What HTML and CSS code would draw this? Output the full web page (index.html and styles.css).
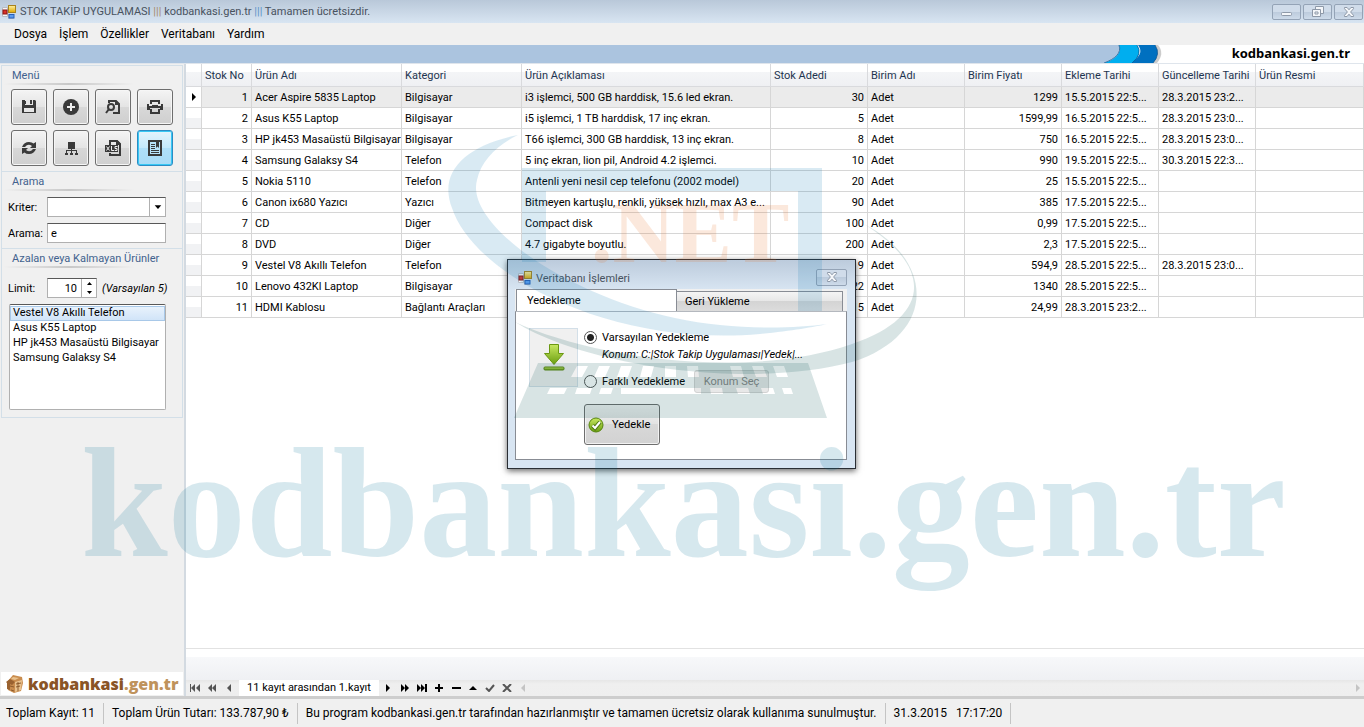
FILE: index.html
```html
<!DOCTYPE html>
<html lang="tr">
<head>
<meta charset="utf-8">
<title>STOK TAKİP UYGULAMASI</title>
<link rel="stylesheet" href="styles.css">
</head>
<body>
<svg class="defs" aria-hidden="true">
  <defs>
    <linearGradient id="gold" x2="0" y2="1"><stop stop-color="#fff0a0"/><stop offset="1" stop-color="#e0a800"/></linearGradient>
    <linearGradient id="green" x2="0" y2="1"><stop stop-color="#c8e860"/><stop offset="1" stop-color="#6a9e10"/></linearGradient>
    <symbol id="app" viewBox="0 0 14 14">
      <path d="M.5 2.500h5v9h-5zM6.500 9.500h5v4h-5z" fill="#f5f5f5" stroke="#b8bcc4"/>
      <rect x="6.500" y=".5" width="7" height="7" fill="url(#gold)" stroke="#a8821c"/>
      <rect x="1" y="5" width="4" height="4" fill="#d83028" stroke="#8c1410"/>
      <rect x="7" y="9.500" width="5" height="3.500" fill="#5c9cf0" stroke="#2860b8"/>
    </symbol>
    <symbol id="cross" viewBox="0 0 12 10"><path d="M1.500.5h2.600L6 2.800 7.900.5h2.600v1.200L7.600 5l2.900 3.300v1.200H7.900L6 7.200 4.100 9.500H1.500V8.300L4.400 5 1.500 1.700z" fill="#f4f6f9" stroke="#8e99a8"/></symbol>
  </defs>
</svg>

<header class="titlebar">
  <svg class="app-icon"><use href="#app"/></svg>
  <h1 class="title">STOK TAKİP UYGULAMASI <span class="bars-a">|||</span> kodbankasi.gen.tr <span class="bars-b">|||</span> Tamamen ücretsizdir.</h1>
  <div class="win-buttons">
    <button class="win-btn" aria-label="Küçült"><svg width="14" height="10" viewBox="0 0 14 10"><rect x="1.500" y="5.500" width="10" height="3" rx="1" fill="#f4f6f9" stroke="#8e99a8"/></svg></button>
    <button class="win-btn" aria-label="Önceki boyut"><svg width="12" height="11" viewBox="0 0 12 11"><g fill="#f4f6f9" stroke="#8e99a8"><path d="M3.500.5h8v7h-8z"/><path d="M.5 3.500h8v7h-8z"/><path d="M3 6h3v2H3z"/></g></svg></button>
    <button class="win-btn" aria-label="Kapat"><svg width="12" height="10"><use href="#cross"/></svg></button>
  </div>
</header>

<nav class="menubar">
  <button>Dosya</button><button>İşlem</button><button>Özellikler</button><button>Veritabanı</button><button>Yardım</button>
</nav>

<div class="banner">
  <svg class="swoosh" viewBox="0 0 80 18">
    <path d="M16 0h64v18H2C12 14 18 8 16 0z" fill="#fff"/>
    <path d="M44 0h12q7 8-1 18h-9z" fill="#9a9a9a" opacity=".5"/>
    <path d="M36 0h17q6 9-2 18H26C36 14 42 8 36 0z" fill="#0070c0"/>
    <path d="M17 0h18q6 9-5 18H2C14 14 20 8 17 0z" fill="#00aeef"/>
    <path d="M0 0h17c3 8-4 14-15 18H0z" fill="#abc4df"/>
    <path d="M17 0c3 8-4 14-15 18M35 0q6 9-5 18M53 0q6 9-2 18" fill="none" stroke="#08508c" stroke-width="1" opacity=".7"/>
  </svg>
  <strong class="banner-name">kodbankasi.gen.tr</strong>
</div>

<main class="workspace">
  <aside class="sidebar">
    <section class="panel">
      <h2>Menü</h2>
      <div class="tools">
        <button class="tool" aria-label="Kaydet"><svg viewBox="0 0 16 16"><path d="M1 1h13l1 1v12H1z"/><path d="M4 1h8v5H4zM3 9h10v4H3z" fill="#e6e6e6"/><path d="M9 1h2v4H9zM4 2h1v3H4z"/></svg></button>
        <button class="tool" aria-label="Ekle"><svg viewBox="0 0 16 16"><circle cx="8" cy="8" r="8"/><path d="M7 4h2v3h3v2H9v3H7V9H4V7h3z" fill="#eee"/></svg></button>
        <button class="tool" aria-label="Bul"><svg viewBox="0 0 16 16"><path d="M4 4V2h7l3 3v9H8M11 2v3h3" fill="none" stroke="#3a3a3a" stroke-width="2"/><circle cx="6" cy="8" r="3" fill="none" stroke="#3a3a3a" stroke-width="2"/><path d="M4 10l-3 4" stroke="#3a3a3a" stroke-width="2"/></svg></button>
        <button class="tool" aria-label="Yazdır"><svg viewBox="0 0 16 16"><path d="M3 1h10v4h-2V3H5v2H3zM0 5h2v2h12V5h2v6h-3V9H3v2H0zM3 10h2v3h6v-3h2v5H3zM5 6h6v1H5z"/></svg></button>
        <button class="tool" aria-label="Yenile"><svg viewBox="0 0 16 16"><path d="M1 7q2-5 7-5 3 0 4.500 1.500L15 2v6H9l2-2Q7 3 4 7zM15 9q-2 5-7 5-3 0-4.500-1.500L1 14V8h6l-2 2q4 3 7-1z"/></svg></button>
        <button class="tool" aria-label="Kategoriler"><svg viewBox="0 0 16 16"><path d="M5 2h7v7h-3v1h5v3h1v2h-3v-2h1v-2H9v2h1v2H7v-2h1v-2H4v2h1v2H2v-2h1v-3h5V9H5z"/></svg></button>
        <button class="tool" aria-label="Excel'e aktar"><svg viewBox="0 0 16 16"><path d="M5 5V1h7l3 3v11H5v-2" fill="none" stroke="#3a3a3a" stroke-width="2"/><path d="M11 0v5h5v-1L12 0z"/><path d="M0 5h13v7H0z"/><path d="M1.500 6.500l3 4m0-4l-3 4M6.500 6v4.500H9M12.500 6.500H10v2h2v2H9.700" fill="none" stroke="#eee"/></svg></button>
        <button class="tool tool-active" aria-label="Rapor"><svg viewBox="0 0 16 16"><path d="M1 0h14v16H1z"/><path d="M3 2h10v12H3z" fill="#b8e2f8"/><path d="M9 1h3v7l-1.500-1.500L9 8zM4 4h4v1H4zM4 6h4v1H4zM4 8h4v1H4zM4 10h8v1H4zM4 12h8v1H4z"/></svg></button>
      </div>
    </section>
    <section class="panel">
      <h2>Arama</h2>
      <div class="field"><label for="kriter">Kriter:</label>
        <span class="combo"><select id="kriter"><option></option></select><svg class="combo-arrow" viewBox="0 0 16 18"><path d="M5 7h7L8.500 11z"/></svg></span></div>
      <div class="field"><label for="arama">Arama:</label><input id="arama" class="box" type="text" value="e"></div>
    </section>
    <section class="panel">
      <h2>Azalan veya Kalmayan Ürünler</h2>
      <div class="field field-limit"><label for="limit">Limit:</label>
        <span class="spinner"><input id="limit" type="number" value="10"><span class="spin-buttons"><button aria-label="Artır"><svg viewBox="0 0 5 3"><path d="M0 3h5L2.500 0z"/></svg></button><button aria-label="Azalt"><svg viewBox="0 0 5 3"><path d="M0 0h5L2.500 3z"/></svg></button></span></span>
        <em>(Varsayılan 5)</em></div>
      <select class="listbox" size="7" aria-label="Azalan ürünler">
        <option selected>Vestel V8 Akıllı Telefon</option><option>Asus K55 Laptop</option><option>HP jk453 Masaüstü Bilgisayar</option><option>Samsung Galaksy S4</option>
      </select>
    </section>
    <div class="brand">
      <svg width="20" height="20" viewBox="0 0 20 20"><path d="M2 8L8 1l9 2 1 6-2 8-7 2-6-3z" fill="#c98c4e"/><path d="M1 8l4-3 5 3-3 3-2-1v6l-3-1V9z" fill="#9a6230"/><path d="M10 8l7-2-1 10-6 2zM8 3l6 1-4 2-4-1z" fill="#e9c28e"/><path d="M11 10l5-1M11 13l4-1M13 8v9M5 12l4 1M6 16l3 1" stroke="#8c5a2c" fill="none"/></svg>
      <strong>kodbankasi<span>.gen.tr</span></strong>
    </div>
  </aside>

  <section class="grid-pane">
    <table class="grid">
      <colgroup><col class="c-ind"><col class="c-no"><col class="c-name"><col class="c-cat"><col class="c-desc"><col class="c-std"><col class="c-std"><col class="c-std"><col class="c-std"><col class="c-std"><col></colgroup>
      <thead><tr><th></th><th>Stok No</th><th>Ürün Adı</th><th>Kategori</th><th>Ürün Açıklaması</th><th>Stok Adedi</th><th>Birim Adı</th><th>Birim Fiyatı</th><th>Ekleme Tarihi</th><th>Güncelleme Tarihi</th><th>Ürün Resmi</th></tr></thead>
      <tbody>
        <tr class="current"><td><svg class="row-mark" viewBox="0 0 4 8"><path d="M0 0l4 4-4 4z"/></svg></td><td class="num">1</td><td>Acer Aspire 5835 Laptop</td><td>Bilgisayar</td><td>i3 işlemci, 500 GB harddisk, 15.6 led ekran.</td><td class="num">30</td><td>Adet</td><td class="num">1299</td><td>15.5.2015 22:5...</td><td>28.3.2015 23:2...</td><td></td></tr>
        <tr><td></td><td class="num">2</td><td>Asus K55 Laptop</td><td>Bilgisayar</td><td>i5 işlemci, 1 TB harddisk, 17 inç ekran.</td><td class="num">5</td><td>Adet</td><td class="num">1599,99</td><td>16.5.2015 22:5...</td><td>28.3.2015 23:0...</td><td></td></tr>
        <tr><td></td><td class="num">3</td><td>HP jk453 Masaüstü Bilgisayar</td><td>Bilgisayar</td><td>T66 işlemci, 300 GB harddisk, 13 inç ekran.</td><td class="num">8</td><td>Adet</td><td class="num">750</td><td>16.5.2015 22:5...</td><td>28.3.2015 23:0...</td><td></td></tr>
        <tr><td></td><td class="num">4</td><td>Samsung Galaksy S4</td><td>Telefon</td><td>5 inç ekran, lion pil, Android 4.2 işlemci.</td><td class="num">10</td><td>Adet</td><td class="num">990</td><td>19.5.2015 22:5...</td><td>30.3.2015 22:3...</td><td></td></tr>
        <tr><td></td><td class="num">5</td><td>Nokia 5110</td><td>Telefon</td><td>Antenli yeni nesil cep telefonu (2002 model)</td><td class="num">20</td><td>Adet</td><td class="num">25</td><td>15.5.2015 22:5...</td><td></td><td></td></tr>
        <tr><td></td><td class="num">6</td><td>Canon ix680 Yazıcı</td><td>Yazıcı</td><td>Bitmeyen kartuşlu, renkli, yüksek hızlı, max A3 e...</td><td class="num">90</td><td>Adet</td><td class="num">385</td><td>17.5.2015 22:5...</td><td></td><td></td></tr>
        <tr><td></td><td class="num">7</td><td>CD</td><td>Diğer</td><td>Compact disk</td><td class="num">100</td><td>Adet</td><td class="num">0,99</td><td>17.5.2015 22:5...</td><td></td><td></td></tr>
        <tr><td></td><td class="num">8</td><td>DVD</td><td>Diğer</td><td>4.7 gigabyte boyutlu.</td><td class="num">200</td><td>Adet</td><td class="num">2,3</td><td>17.5.2015 22:5...</td><td></td><td></td></tr>
        <tr><td></td><td class="num">9</td><td>Vestel V8 Akıllı Telefon</td><td>Telefon</td><td></td><td class="num">9</td><td>Adet</td><td class="num">594,9</td><td>28.5.2015 22:5...</td><td>28.3.2015 23:0...</td><td></td></tr>
        <tr><td></td><td class="num">10</td><td>Lenovo 432Kl Laptop</td><td>Bilgisayar</td><td></td><td class="num">22</td><td>Adet</td><td class="num">1340</td><td>28.5.2015 22:5...</td><td></td><td></td></tr>
        <tr><td></td><td class="num">11</td><td>HDMI Kablosu</td><td>Bağlantı Araçları</td><td></td><td class="num">15</td><td>Adet</td><td class="num">24,99</td><td>28.3.2015 23:2...</td><td></td><td></td></tr>
      </tbody>
    </table>
    <div class="grid-footer"></div>
    <div class="navigator">
      <button class="dim" aria-label="İlk"><svg viewBox="0 0 10 8"><path d="M0 0h1v8H0zM5 0v8L1 4zM10 0v8L6 4z"/></svg></button>
      <button class="dim" aria-label="Önceki sayfa"><svg viewBox="0 0 10 8"><path d="M5 0v8L1 4zM9 0v8L5 4z"/></svg></button>
      <button class="dim" aria-label="Önceki"><svg viewBox="0 0 10 8"><path d="M7 0v8L3 4z"/></svg></button>
      <span class="nav-text">11 kayıt arasından 1.kayıt</span>
      <button aria-label="Sonraki"><svg viewBox="0 0 10 8"><path d="M3 0l4 4-4 4z"/></svg></button>
      <button aria-label="Sonraki sayfa"><svg viewBox="0 0 10 8"><path d="M1 0l4 4-4 4zM5 0l4 4-4 4z"/></svg></button>
      <button aria-label="Son"><svg viewBox="0 0 10 8"><path d="M0 0l4 4-4 4zM4 0l4 4-4 4zM8 0h2v8H8z"/></svg></button>
      <button aria-label="Ekle"><svg viewBox="0 0 10 8"><path d="M4 0h2v3h3v2H6v3H4V5H1V3h3z"/></svg></button>
      <button aria-label="Sil"><svg viewBox="0 0 10 8"><path d="M1 3h9v2H1z"/></svg></button>
      <button aria-label="Düzenle"><svg viewBox="0 0 10 8"><path d="M1 6h8L5 2z"/></svg></button>
      <button class="dim" aria-label="Onayla"><svg viewBox="0 0 10 8"><path d="M1 4l3 3 5-6" fill="none" stroke="#555" stroke-width="2"/></svg></button>
      <button class="dim" aria-label="Vazgeç"><svg viewBox="0 0 10 8"><path d="M1 0l8 8M9 0L1 8" fill="none" stroke="#555" stroke-width="2"/></svg></button>
      <div class="hscroll"><svg viewBox="0 0 4 8"><path d="M4 0v8L0 4z"/></svg><svg viewBox="0 0 4 8"><path d="M0 0l4 4-4 4z"/></svg></div>
    </div>
  </section>
</main>

<footer class="statusbar">
  <span>Toplam Kayıt: 11</span><span>Toplam Ürün Tutarı: 133.787,90 ₺</span><span>Bu program kodbankasi.gen.tr tarafından hazırlanmıştır ve tamamen ücretsiz olarak kullanıma sunulmuştur.</span><span>31.3.2015 &nbsp; 17:17:20</span>
</footer>

<div class="dialog" role="dialog" aria-labelledby="dlg-title">
  <div class="dialog-title">
    <svg class="app-icon"><use href="#app"/></svg>
    <h2 id="dlg-title">Veritabanı İşlemleri</h2>
    <button class="win-btn" aria-label="Kapat"><svg width="12" height="10"><use href="#cross"/></svg></button>
  </div>
  <div class="tabs"><button class="tab tab-on">Yedekleme</button><button class="tab">Geri Yükleme</button></div>
  <div class="tab-page">
    <div class="picture"><svg width="22" height="28" viewBox="0 0 22 28"><path d="M6.500.5h9v9h5L11 20.500 1.500 9.500h5z" fill="url(#green)" stroke="#6b9812"/><rect x="1" y="23" width="20" height="3" rx="1" fill="url(#green)" stroke="#5c860e"/></svg></div>
    <div class="options">
      <label class="choice"><input type="radio" name="yer" checked>Varsayılan Yedekleme</label>
      <em class="location">Konum: C:|Stok Takip Uygulaması|Yedek|...</em>
      <div class="choice-row"><label class="choice"><input type="radio" name="yer">Farklı Yedekleme</label><button class="pick" disabled>Konum Seç</button></div>
      <button class="backup"><svg width="16" height="16" viewBox="0 0 16 16"><circle cx="8" cy="8" r="7" fill="url(#green)" stroke="#55850f"/><path d="M4.500 8.500L7 11l5-6" fill="none" stroke="#4c7612" stroke-width="4"/><path d="M4.500 8.500L7 11l5-6" fill="none" stroke="#fff" stroke-width="2"/></svg>Yedekle</button>
    </div>
  </div>
</div>

<svg class="watermark" viewBox="0 0 1364 727" preserveAspectRatio="xMinYMin meet" aria-hidden="true">
  <path class="w-blue" d="M518 135C465 146 438 172 452 208C474 275 610 347 760 334C790 331 815 327 827 324C790 329 730 330 675 318C560 293 465 222 477 180C481 161 497 145 518 135z"/>
  <path class="w-blue" d="M522 168H822V311H798V191H546V262H522z"/>
  <path class="w-gray" d="M864 224C935 268 930 318 852 344C746 381 590 357 515 322C586 366 746 390 852 362C935 336 937 262 864 224z"/>
  <path class="w-gray" fill-rule="evenodd" d="M538 363H808L827 418H514zM577 366l-6 11h11l6-11zM599 366l-5 11h11l5-11zM621 366l-4 11h11l4-11zM643 366l-3 11h11l3-11zM665 366v11h11v-11zM687 366l1 11h11l-1-11zM730 366l3 11h11l-3-11zM752 366l4 11h11l-4-11zM773 366l4 11h11l-4-11zM550 388l-3 6h17l3-6zM577 388l-2 6h15l2-6zM601 388l-2 6h12l2-6zM621 388v6h80v-6zM710 388l1 6h12l-1-6zM736 388l2 6h12l-2-6zM761 388l2 6h12l-2-6zM782 388l2 6h9l-2-6z"/>
  <text class="w-net" x="591" y="262">.NET</text>
  <text class="w-name" x="81" y="556">kodbankasi.gen.tr</text>
</svg>
</body>
</html>
```

FILE: styles.css
```css
* { box-sizing: border-box; }
body {
  margin: 0; min-height: 100vh; display: flex; flex-direction: column; position: relative;
  background: #f0f0f0; color: #000; font: 11px/15px Roboto, "Noto Sans", sans-serif;
}
button, input, select { font: inherit; color: inherit; margin: 0; }
button { padding: 0; }
h1, h2 { margin: 0; font-size: 11px; font-weight: 400; }
svg { display: block; flex: none; }
.defs { position: absolute; width: 0; height: 0; }

.titlebar {
  height: 23px; display: flex; align-items: center; padding: 0 1px 0 2px; gap: 4px;
  background: linear-gradient(#b9c8d9, #d8e5f2);
}
.app-icon { width: 14px; height: 14px; }
.title { flex: 1; color: #48525e; white-space: nowrap; }
.bars-a { color: #a88c6c; }
.bars-b { color: #5c94c8; }
.win-buttons { display: flex; gap: 2px; }
.win-btn {
  width: 29px; height: 16px; display: flex; align-items: center; justify-content: center;
  border: 1px solid #94a3b6; border-radius: 2px; background: linear-gradient(#d0dcea 50%, #bccbdc 50%, #cedbea);
}

.menubar { height: 22px; display: flex; align-items: center; gap: 12px; padding-left: 14px; font-size: 12px; }
.menubar button { border: 0; background: none; }

.banner { height: 19px; display: flex; background: #abc4df; border-bottom: 1px solid #dfe5ec; }
.swoosh { width: 80px; height: 18px; margin-left: auto; }
.banner-name { width: 182px; padding-right: 14px; background: #fff; text-align: right; font: 700 13px/17px "Noto Sans", sans-serif; }

.workspace { flex: 1; display: flex; min-height: 0; }
.sidebar { width: 186px; display: flex; flex-direction: column; padding: 1px; border-right: 2px solid #d3dae1; }
.panel { border: 1px solid #d3dfe8; padding: 2px 16px 5px 6px; }
.panel + .panel { border-top: 0; }
.panel h2 { padding-left: 4px; color: #42628e; white-space: nowrap; }
.panel h2::after { content: ""; display: block; height: 2px; width: 130px; margin-left: -8px; background: linear-gradient(90deg, transparent, #c8c8c8, transparent); }
.tools { display: grid; grid-template-columns: repeat(4, 36px); gap: 5px 6px; padding: 4px 0 0 3px; }
.tool {
  height: 36px; display: grid; place-items: center; border: 1px solid #6e6e6e; border-radius: 3px;
  background: linear-gradient(#f4f4f4, #e4e4e4 50%, #d8d8d8 50%, #cfcfcf); box-shadow: inset 0 0 0 1px #f6f6f6;
}
.tool svg { width: 16px; height: 16px; fill: #3a3a3a; }
.tool-active { border-color: #2c8cc4; background: linear-gradient(#e2f4fd, #c4e8fa 50%, #b0dff8 50%, #a8dbf6); box-shadow: inset 0 0 0 1px #38c8f4; }
.field { display: flex; align-items: center; height: 20px; margin-top: 6px; white-space: nowrap; }
.field-limit { margin-top: 10px; }
.field label { width: 39px; flex: none; }
.field em { margin-left: 5px; }
.box, .combo, .spinner { height: 20px; border: 1px solid #b0b0b0; border-top-color: #585858; background: #fff; }
.box { flex: 1; min-width: 0; padding: 0 3px; }
.combo { flex: 1; display: flex; }
.combo select { flex: 1; min-width: 0; border: 0; appearance: none; background: #fff; }
.combo-arrow { width: 16px; height: 18px; border-left: 1px solid #b0b0b0; }
.spinner { width: 50px; flex: none; display: flex; }
.spinner input { width: 33px; border: 0; padding: 0 4px; text-align: right; appearance: textfield; background: none; }
.spinner input::-webkit-inner-spin-button { appearance: none; margin: 0; }
.spin-buttons { flex: 1; display: flex; flex-direction: column; border-left: 1px solid #b0b0b0; }
.spin-buttons button { flex: 1; display: grid; place-items: center; border: 0; background: none; }
.spin-buttons svg { width: 5px; height: 3px; }
.listbox { display: block; width: calc(100% - 1px); height: 106px; margin: 6px 0 2px 1px; padding: 1px 0 0; border: 1px solid #b0b0b0; border-top-color: #585858; background: #fff; overflow: hidden; }
.listbox option { height: 15px; min-height: 0; padding: 0 3px; line-height: 15px; }
.listbox option:checked { color: #000; background: linear-gradient(#eaf3fc, #cfe3f8); outline: 1px solid #a8c8e8; outline-offset: -1px; }
.brand { height: 23px; margin-top: auto; padding-left: 4px; display: flex; align-items: center; gap: 3px; background: #fff; color: #8a5426; font: 700 16px/20px "Open Sans", sans-serif; }
.brand span { color: #bf935c; }

.grid-pane { flex: 1; min-width: 0; display: flex; flex-direction: column; background: #fff; }
.grid { width: 100%; table-layout: fixed; border-collapse: separate; border-spacing: 0; }
.c-ind { width: 16px; }
.c-no { width: 50px; }
.c-name { width: 150px; }
.c-cat { width: 120px; }
.c-desc { width: 249px; }
.c-std { width: 97px; }
.grid th, .grid td { padding: 0 3px; border: solid #d6d6d6; border-width: 0 1px 1px 0; font-weight: 400; text-align: left; white-space: nowrap; overflow: hidden; }
.grid th { height: 23px; color: #1e3450; background: linear-gradient(#fff 35%, #f4f5f7 35%, #eff0f3); border-color: #d9dadd; }
.grid td { height: 21px; }
.grid td:first-child { background: linear-gradient(#fff 50%, #f1f2f4 50%); }
.grid .num { text-align: right; }
.grid .current td { background: #ebebeb; }
.grid .current td:first-child { background: #fff; }
.row-mark { width: 4px; height: 8px; margin-left: 3px; }
.grid-footer { margin-top: auto; height: 32px; border-top: 1px solid #e2e2e2; background: linear-gradient(#fff 8px, #f7f8fa 8px, #eff0f3); }
.navigator { height: 16px; display: flex; background: linear-gradient(#e6e6e6, #efefef 4px, #eee); }
.navigator button { width: 17px; display: grid; place-items: center; border: 0; background: none; }
.navigator svg { width: 10px; height: 8px; }
.navigator .dim { fill: #555; }
.nav-text { width: 140px; margin-left: 2px; text-align: center; background: #fff; white-space: nowrap; }
.hscroll { flex: 1; display: flex; align-items: center; justify-content: space-between; padding: 0 4px 0 6px; fill: #c4c4c4; }
.navigator .hscroll svg { width: 4px; }

.statusbar { height: 31px; display: flex; align-items: center; border-top: 3px solid #cdcdcd; padding: 3px 0 3px 6px; font-size: 12px; white-space: nowrap; }
.statusbar span { padding-right: 8px; margin-right: 8px; border-right: 1px solid #c4c4c4; line-height: 21px; }

.dialog {
  position: absolute; left: 507px; top: 259px; width: 349px; padding: 1px 8px 8px 7px;
  border: 1px solid #2a2e34; background: linear-gradient(#bccbdc, #d8e5f2 30px); box-shadow: 0 2px 6px rgba(0, 0, 0, .6);
}
.dialog-title { height: 28px; display: flex; align-items: center; gap: 4px; padding: 6px 0 0 3px; color: #48525e; }
.dialog-title h2 { flex: 1; }
.dialog-title .win-btn { width: 31px; height: 17px; margin-bottom: 2px; }
.tabs { height: 22px; display: flex; align-items: flex-end; background: #f0f0f0; padding: 0 4px 0 1px; }
.tab { flex: 1; height: 20px; padding: 0 8px; text-align: left; border: 1px solid #888c94; border-width: 1px 1px 0 0; background: linear-gradient(#f4f4f4, #e6e6e6 50%, #d4d4d4 50%, #dcdcdc); }
.tab-on { flex: 0 0 161px; height: 22px; padding: 0 10px; border-width: 1px 1px 0 1px; background: #fff; }
.tab-page { height: 149px; display: flex; gap: 6px; padding: 16px 13px 14px; background: #fff; border: 1px solid #888c94; border-top-color: #b4b8be; }
.picture { width: 49px; height: 59px; flex: none; display: grid; place-items: center; background: #f0f0f0; border: 1px solid #d3dfe8; }
.options { flex: 1; min-width: 0; display: flex; flex-direction: column; align-items: flex-start; }
.choice { display: flex; align-items: center; gap: 5px; height: 18px; white-space: nowrap; }
.choice input { appearance: none; flex: none; width: 13px; height: 13px; margin: 0; border: 1px solid #555; border-radius: 50%; background: #fff; }
.choice input:checked { background: radial-gradient(circle, #222 3px, #fff 4px); }
.location { padding-left: 18px; line-height: 17px; white-space: nowrap; }
.choice-row { display: flex; align-items: center; gap: 9px; margin-top: 7px; height: 23px; }
.choice-row .choice { width: 101px; }
.pick { width: 75px; height: 23px; border: 1px solid #d2d2d2; border-radius: 3px; background: #e8e8e8; color: #858585; }
.backup {
  width: 76px; height: 41px; margin-top: 11px; padding: 0 3px; display: flex; flex: none; align-items: center; gap: 8px;
  border: 1px solid #6e6e6e; border-radius: 3px; background: linear-gradient(#f2f2f2, #e2e2e2 50%, #d8d8d8 50%, #d2d2d2); box-shadow: inset 0 0 0 1px #f2f2f2;
}

.watermark { position: absolute; inset: 0; width: 100%; height: auto; pointer-events: none; }
.w-blue { fill: rgba(20, 125, 180, .16); }
.w-gray { fill: rgba(12, 86, 86, .16); }
.w-net { font: 700 86px "Liberation Serif", serif; fill: rgba(230, 111, 36, .16); }
.w-name { font: 700 156px "Liberation Serif", serif; fill: rgba(0, 112, 150, .16); }
```
